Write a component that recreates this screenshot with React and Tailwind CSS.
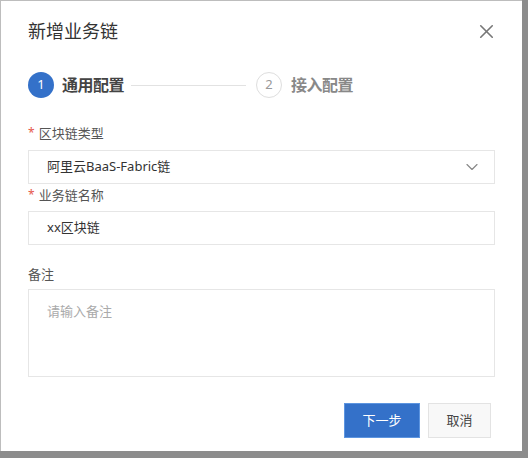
import { X, ChevronDown } from "lucide-react";

const font = { fontFamily: '"Noto Sans", "Noto Sans CJK SC", sans-serif' };

function Label({ required, children }) {
  return (
    <div className="flex items-center text-[13px] leading-[18px] text-[#555]">
      {required && <span className="text-[#e5574c] mr-[4px] text-[12px]">*</span>}
      {children}
    </div>
  );
}

export default function App() {
  return (
    <div className="w-[528px] h-[458px] bg-[#8c8c8c] overflow-hidden" style={font}>
      <div className="w-[522px] h-[451px] bg-white border-l border-t border-[#bdbdbd] px-[27px] pt-[16px]">
        <div className="flex items-center justify-between h-[28px]">
          <h1 className="text-[18px] text-[#333] font-normal">新增业务链</h1>
          <X size={23} strokeWidth={1.7} className="text-[#777] mr-[-3px]" />
        </div>

        <div className="flex items-center mt-[26px] h-[28px]">
          <div className="w-[26px] h-[26px] rounded-full bg-[#3471c9] text-white text-[13px] flex items-center justify-center">1</div>
          <span className="ml-[8px] text-[16px] font-bold text-[#444] tracking-[-0.5px]">通用配置</span>
          <div className="ml-[7px] w-[115px] h-px bg-[#e2e2e2]" />
          <div className="ml-[10px] w-[26px] h-[26px] rounded-full border border-[#dedede] text-[#999] text-[13px] flex items-center justify-center">2</div>
          <span className="ml-[9px] text-[16px] font-bold text-[#888] tracking-[-0.5px]">接入配置</span>
        </div>

        <div className="mt-[25px]">
          <Label required>区块链类型</Label>
          <div className="mt-[8px] h-[34px] border border-[#e6e6e6] flex items-center justify-between pl-[18px] pr-[12px] text-[13px] text-[#333]">
            <span>阿里云BaaS-Fabric链</span>
            <ChevronDown size={20} strokeWidth={1.4} className="text-[#888]" />
          </div>
        </div>

        <div className="mt-[2px]">
          <Label required>业务链名称</Label>
          <div className="mt-[7px] h-[34px] border border-[#e6e6e6] flex items-center pl-[18px] text-[13px] text-[#333]">
            xx区块链
          </div>
        </div>

        <div className="mt-[20px]">
          <Label>备注</Label>
          <div className="mt-[6px] h-[88px] border border-[#e6e6e6] pl-[18px] pt-[12px] text-[13px] text-[#aaa]">
            请输入备注
          </div>
        </div>

        <div className="flex justify-end mt-[26px] mr-[4px]">
          <button className="w-[76px] h-[35px] bg-[#3471c9] text-white text-[13px] border border-[#5d95e0]">下一步</button>
          <button className="ml-[8px] w-[63px] h-[35px] bg-[#f8f8f8] border border-[#e3e3e3] text-[#444] text-[13px]">取消</button>
        </div>
      </div>
    </div>
  );
}
